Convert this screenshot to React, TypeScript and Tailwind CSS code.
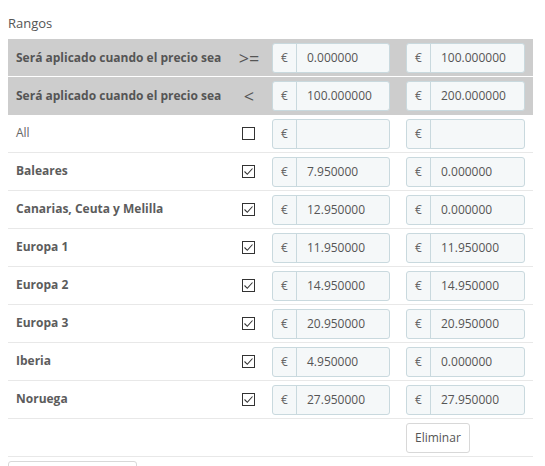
import React from 'react';

type Zone = { name: string; checked: boolean; from: string; to: string; bold: boolean };

const zones: Zone[] = [
  { name: 'All', checked: false, from: '', to: '', bold: false },
  { name: 'Baleares', checked: true, from: '7.950000', to: '0.000000', bold: true },
  { name: 'Canarias, Ceuta y Melilla', checked: true, from: '12.950000', to: '0.000000', bold: true },
  { name: 'Europa 1', checked: true, from: '11.950000', to: '11.950000', bold: true },
  { name: 'Europa 2', checked: true, from: '14.950000', to: '14.950000', bold: true },
  { name: 'Europa 3', checked: true, from: '20.950000', to: '20.950000', bold: true },
  { name: 'Iberia', checked: true, from: '4.950000', to: '0.000000', bold: true },
  { name: 'Noruega', checked: true, from: '27.950000', to: '27.950000', bold: true },
];

const rowGrid = 'grid grid-cols-[224px_32px_134px_135px]';

function PriceInput({ value, width }: { value: string; width: string }) {
  return (
    <div className={`flex h-[30px] ${width} rounded-[3px] border border-[#c9d9de] bg-[#f5f8f9] text-[12px] text-[#555]`}>
      <span className="flex w-[24px] shrink-0 items-center justify-center border-r border-[#c9d9de] text-[#666]">€</span>
      <span className="flex items-center pl-[10px]">{value}</span>
    </div>
  );
}

function Checkbox({ checked }: { checked: boolean }) {
  return (
    <span className="flex h-[13px] w-[13px] items-center justify-center border border-[#333] bg-white">
      {checked && (
        <svg viewBox="0 0 11 11" className="h-[11px] w-[11px]">
          <path d="M1.5 5.5 L4.3 8.3 L9.5 2.5" fill="none" stroke="#333" strokeWidth="1.1" />
        </svg>
      )}
    </span>
  );
}

export default function App() {
  return (
    <div className="h-[466px] w-[545px] overflow-hidden bg-white px-[8px] pt-[14px] font-['Open_Sans',sans-serif] text-[#555]">
      <h3 className="mb-[7px] text-[13px] leading-[18px] text-[#555]">Rangos</h3>

      <div className="w-[525px]">
        {[
          { op: '>=', from: '0.000000', to: '100.000000' },
          { op: '<', from: '100.000000', to: '200.000000' },
        ].map((r, i) => (
          <div key={i} className={`${rowGrid} h-[38px] bg-[#cdcdcd] ${i === 0 ? 'border-b border-white' : ''}`}>
            <div className="flex items-center pl-[8px] text-[12px] font-bold text-[#555]">Será aplicado cuando el precio sea</div>
            <div className="flex items-center justify-center pl-[2px] text-[18px] leading-none text-[#555]">{r.op}</div>
            <div className="flex items-center pl-[8px]">
              <PriceInput value={r.from} width="w-[118px]" />
            </div>
            <div className="flex items-center pl-[8px]">
              <PriceInput value={r.to} width="w-[119px]" />
            </div>
          </div>
        ))}

        {zones.map((z) => (
          <div key={z.name} className={`${rowGrid} h-[38px] border-b border-[#e8e8e8]`}>
            <div className={`pl-[8px] pt-[10px] text-[12px] leading-[16px] ${z.bold ? 'font-bold text-[#5c5c5c]' : 'text-[#666]'}`}>
              {z.name}
            </div>
            <div className="flex items-center justify-center pl-[1px]">
              <Checkbox checked={z.checked} />
            </div>
            <div className="flex items-center pl-[8px]">
              <PriceInput value={z.from} width="w-[118px]" />
            </div>
            <div className="flex items-center pl-[8px]">
              <PriceInput value={z.to} width="w-[119px]" />
            </div>
          </div>
        ))}

        <div className={`${rowGrid} h-[38px] border-b border-[#e8e8e8]`}>
          <div />
          <div />
          <div />
          <div className="flex items-center pl-[8px]">
            <button className="h-[30px] rounded-[3px] border border-[#d8d8d8] bg-white px-[8px] text-[12px] text-[#555]">Eliminar</button>
          </div>
        </div>

        <div className="mt-[4px] h-[20px] w-[129px] rounded-[3px] border border-[#d8d8d8] bg-white" />
      </div>
    </div>
  );
}
